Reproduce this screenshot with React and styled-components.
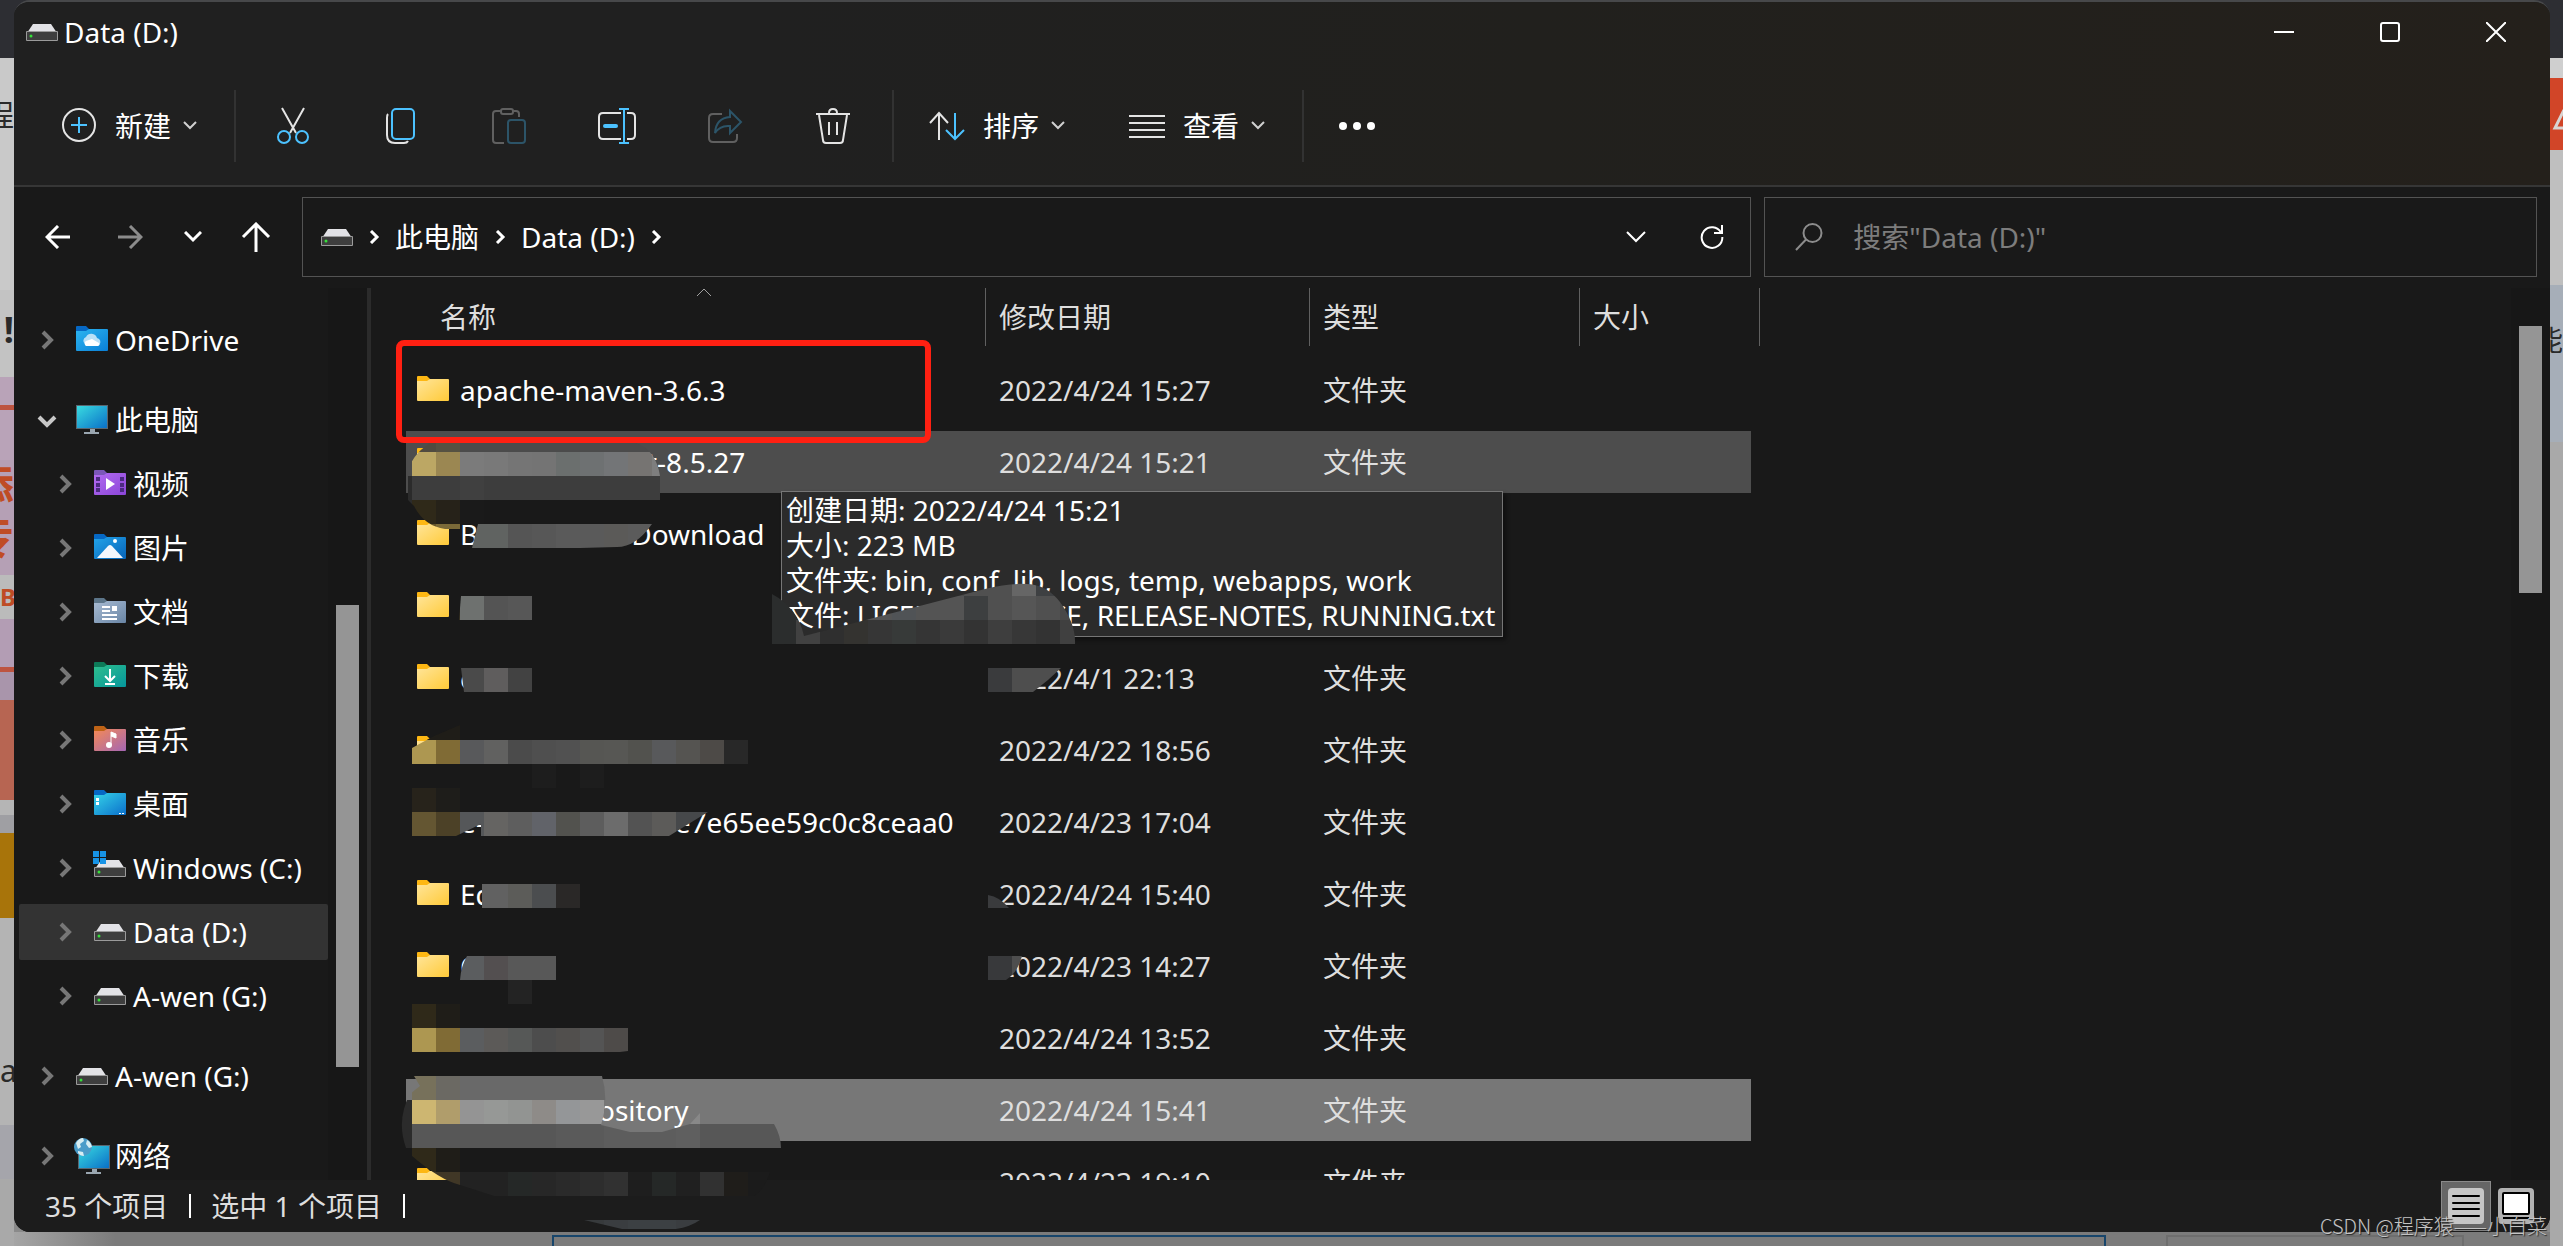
import React, { useState } from "react";
import styled, { createGlobalStyle } from "styled-components";

const treeItems = [
  { id: "onedrive", name: "OneDrive", icon: "onedrive", root: true },
  { id: "pc", name: "此电脑", icon: "pc", root: true, open: true },
  { id: "video", name: "视频", icon: "video" },
  { id: "picture", name: "图片", icon: "picture" },
  { id: "document", name: "文档", icon: "document" },
  { id: "download", name: "下载", icon: "download" },
  { id: "music", name: "音乐", icon: "music" },
  { id: "desktop", name: "桌面", icon: "desktop" },
  { id: "c", name: "Windows (C:)", icon: "system" },
  { id: "d", name: "Data (D:)", icon: "drive" },
  { id: "g", name: "A-wen (G:)", icon: "drive" },
  { id: "g-root", name: "A-wen (G:)", icon: "drive", root: true },
  { id: "network", name: "网络", icon: "network", root: true },
];

// gap is the width of the part of the name that is covered
const files = [
  { head: "apache-maven-3.6.3", date: "2022/4/24 15:27", type: "文件夹" },
  { gap: 187, tail: "t-8.5.27", date: "2022/4/24 15:21", type: "文件夹", state: "hover" },
  { head: "B", gap: 153, tail: "Download" },
  { gap: 72 },
  { head: "c", gap: 60, date: "2022/4/1 22:13", type: "文件夹" },
  { gap: 288, date: "2022/4/22 18:56", type: "文件夹" },
  { head: "e-", gap: 190, tail: "e7e65ee59c0c8ceaa0", date: "2022/4/23 17:04", type: "文件夹" },
  { head: "Ed", gap: 90, date: "2022/4/24 15:40", type: "文件夹" },
  { head: "C", gap: 80, date: "2022/4/23 14:27", type: "文件夹" },
  { gap: 168, date: "2022/4/24 13:52", type: "文件夹" },
  { gap: 138, tail: "ository", date: "2022/4/24 15:41", type: "文件夹", state: "selected" },
  { gap: 288, date: "2022/4/23 19:10", type: "文件夹" },
];

const App = () => {
  const [current, setCurrent] = useState("d");
  const [keyword, setKeyword] = useState("");

  return (
    <Desktop>
      <GlobalStyle />
      <Edge>
        <Strip $h={58} $bg="#2d2e33" />
        <Strip $h={232} $bg="#c9c9c9" $size={30} $pad={42}>程</Strip>
        <Strip $h={87} $bg="#c3c3c3" $size={36} $pad={22} $bold>!</Strip>
        <Strip $h={28} $bg="#b9a3b8" />
        <Strip $h={5} $bg="#bd5440" />
        <Strip $h={50} $bg="#b9a3b8" />
        <Strip $h={55} $bg="#b5a0b5" $color="#bf4c25" $size={44} $pad={4} $bold>添</Strip>
        <Strip $h={60} $bg="#b5a0b5" $color="#bf4c25" $size={44} $bold>专</Strip>
        <Strip $h={44} $bg="#bbbbbb" $color="#bf4c25" $size={24} $pad={10} $bold $start>BA</Strip>
        <Strip $h={48} $bg="#b39db4" />
        <Strip $h={5} $bg="#bd5440" />
        <Strip $h={28} $bg="#a995ab" />
        <Strip $h={100} $bg="#b76552" />
        <Strip $h={15} $bg="#b5b5b5" />
        <Strip $h={18} $bg="#9f9fa3" />
        <Strip $h={85} $bg="#a8740a" />
        <Strip $h={207} $bg="#b4b4b4" $size={30} $pad={138} $start>a</Strip>
        <Strip $h={54} $bg="#a5a5ab" />
        <Strip $h={67} $bg="#a9a9a9" />
      </Edge>

      <Center>
        <Window>
          <Top>
            <TitleBar>
              <FileIcon kind="drive" />
              <Title>Data (D:)</Title>
              <CaptionButton aria-label="最小化">
                <svg width="20" height="20"><path d="M0 10h20" stroke="#fff" strokeWidth="2" /></svg>
              </CaptionButton>
              <CaptionButton aria-label="最大化">
                <svg width="20" height="20" fill="none">
                  <rect x="1" y="1" width="18" height="18" rx="2" stroke="#fff" strokeWidth="2" />
                </svg>
              </CaptionButton>
              <CaptionButton aria-label="关闭">
                <svg width="20" height="20"><path d="M0 0l20 20M20 0L0 20" stroke="#fff" strokeWidth="2" /></svg>
              </CaptionButton>
            </TitleBar>
            <Toolbar>
              <LabelButton>
                <ToolIcon kind="add" />
                新建
                <SmallChevron />
              </LabelButton>
              <Divider />
              <IconButton aria-label="剪切"><ToolIcon kind="cut" /></IconButton>
              <IconButton aria-label="复制"><ToolIcon kind="copy" /></IconButton>
              <IconButton aria-label="粘贴" disabled><ToolIcon kind="paste" /></IconButton>
              <IconButton aria-label="重命名"><ToolIcon kind="rename" /></IconButton>
              <IconButton aria-label="共享" disabled><ToolIcon kind="share" /></IconButton>
              <IconButton aria-label="删除"><ToolIcon kind="trash" /></IconButton>
              <Divider />
              <LabelButton>
                <ToolIcon kind="sort" />
                排序
                <SmallChevron />
              </LabelButton>
              <LabelButton>
                <ToolIcon kind="view" />
                查看
                <SmallChevron />
              </LabelButton>
              <Divider />
              <LabelButton aria-label="更多"><ToolIcon kind="more" /></LabelButton>
            </Toolbar>
          </Top>

          <NavBar>
            <NavButton aria-label="后退">
              <svg width="26" height="24" fill="none" stroke="#fff" strokeWidth="3">
                <path d="M25 12H3M13 1L2 12l11 11" />
              </svg>
            </NavButton>
            <NavButton aria-label="前进">
              <svg width="26" height="24" fill="none" stroke="#8c8c8c" strokeWidth="3">
                <path d="M1 12h22M13 1l11 11-11 11" />
              </svg>
            </NavButton>
            <NavButton aria-label="最近位置" $narrow>
              <svg width="18" height="12" fill="none" stroke="#fff" strokeWidth="3"><path d="M1 1l8 8 8-8" /></svg>
            </NavButton>
            <NavButton aria-label="上移">
              <svg width="30" height="30" fill="none" stroke="#fff" strokeWidth="3">
                <path d="M15 30V3M2 15L15 2l13 13" />
              </svg>
            </NavButton>
            <AddressBar>
              <FileIcon kind="drive" />
              <CrumbChevron />
              <Crumb href="#pc">此电脑</Crumb>
              <CrumbChevron />
              <Crumb href="#d">Data (D:)</Crumb>
              <CrumbChevron />
              <Spacer />
              <AddressButton aria-label="历史记录">
                <svg width="20" height="12" fill="none" stroke="#fff" strokeWidth="2"><path d="M1 1l9 9 9-9" /></svg>
              </AddressButton>
              <AddressButton aria-label="刷新">
                <svg width="26" height="26" fill="none" stroke="#fff" strokeWidth="2">
                  <path d="M22 8.500A10.300 10.300 0 1 0 23.300 13M23 1v8h-8" />
                </svg>
              </AddressButton>
            </AddressBar>
            <SearchBox>
              <svg width="28" height="28" fill="none" stroke="#8c8c8c" strokeWidth="2">
                <circle cx="17.500" cy="10" r="9" />
                <path d="M11 16.500L1 27" />
              </svg>
              <SearchInput
                aria-label="搜索"
                placeholder={'搜索"Data (D:)"'}
                value={keyword}
                onChange={(e) => setKeyword(e.target.value)}
              />
            </SearchBox>
          </NavBar>

          <Main>
            <SideBar>
              <Tree>
                {treeItems.map((item) => (
                  <TreeItem
                    key={item.id}
                    $root={item.root}
                    $active={item.id === current}
                    onClick={() => setCurrent(item.id)}
                  >
                    <TreeChevron open={item.open} />
                    <FileIcon kind={item.icon} />
                    {item.name}
                  </TreeItem>
                ))}
              </Tree>
              <ScrollTrack $top={317}>
                <ScrollThumb $h={462} />
              </ScrollTrack>
            </SideBar>

            <FilePane>
              <FileTable>
                <colgroup>
                  <col width="580" />
                  <col width="324" />
                  <col width="270" />
                  <col width="180" />
                </colgroup>
                <thead>
                  <tr>
                    <Th>
                      <HeadCell $name>
                        名称
                        <SortMark width="16" height="9" fill="none" stroke="#a0a0a0">
                          <path d="M1 8l7-7 7 7" />
                        </SortMark>
                      </HeadCell>
                    </Th>
                    <Th><HeadCell>修改日期</HeadCell></Th>
                    <Th><HeadCell>类型</HeadCell></Th>
                    <Th><HeadCell>大小</HeadCell></Th>
                  </tr>
                </thead>
                <tbody>
                  {files.map((file, i) => (
                    <tr key={i}>
                      <Td>
                        <NameCell $state={file.state}>
                          <FileIcon kind="folder" />
                          <span>
                            {file.head}
                            {file.gap && <Covered $w={file.gap} />}
                            {file.tail}
                          </span>
                        </NameCell>
                      </Td>
                      <Td><Cell $state={file.state}>{file.date}</Cell></Td>
                      <Td><Cell $state={file.state}>{file.type}</Cell></Td>
                      <Td><Cell $state={file.state} $last /></Td>
                    </tr>
                  ))}
                </tbody>
              </FileTable>
              <Tooltip role="tooltip">
                <div>创建日期: 2022/4/24 15:21</div>
                <div>大小: 223 MB</div>
                <div>文件夹: bin, conf, lib, logs, temp, webapps, work</div>
                <div>文件: LICENSE, NOTICE, RELEASE-NOTES, RUNNING.txt</div>
              </Tooltip>
              <RedMark />
            </FilePane>
            <ScrollTrack $top={38}>
              <ScrollThumb $h={267} />
            </ScrollTrack>
          </Main>

          <StatusBar>
            <span>35 个项目</span>
            <StatusLine />
            <span>选中 1 个项目</span>
            <StatusLine />
            <Spacer />
            <ViewButton $active aria-label="详细信息">
              <svg width="36" height="36">
                <rect width="36" height="36" rx="4" fill="#c6c6c6" />
                <path d="M5 8h26M5 15h26M5 21h26M5 28h26" stroke="#000" strokeWidth="2" strokeLinecap="round" />
              </svg>
            </ViewButton>
            <ViewButton aria-label="大缩略图">
              <svg width="36" height="36">
                <rect width="36" height="36" rx="4" fill="#b2b2b2" />
                <rect x="5" y="5" width="26" height="21" rx="1" fill="#fff" stroke="#000" strokeWidth="2" />
                <path d="M5 30h26" stroke="#000" strokeWidth="2" />
              </svg>
            </ViewButton>
          </StatusBar>
        </Window>
        <BelowWindow>
          <BlueFrame />
          <GreyFrame />
        </BelowWindow>
      </Center>

      <Edge>
        <Strip $h={58} $bg="#2d2e33" />
        <Strip $h={20} $bg="#cfcfcf" />
        <Strip $h={72} $bg="#d14528">
          <svg width="13" height="72" fill="none" stroke="#d8d4d2" strokeWidth="3">
            <path d="M14 32L5 50h10" />
          </svg>
        </Strip>
        <Strip $h={135} $bg="#bfbfbf" />
        <Strip $h={157} $bg="#a6aeb8" $size={28} $pad={41}>能</Strip>
        <Strip $h={804} $bg="#a9a9a9" />
      </Edge>

      <Mosaic />
      <Watermark>CSDN @程序猿——小白菜</Watermark>
    </Desktop>
  );
};

export default App;

const folderBody = {
  folder: ["#ffe59a", "#ffca38", "#fdb713"],
  onedrive: ["#2cb5f0", "#0a7fd6", "#0668c4"],
  video: ["#b36cf0", "#8b45d8", "#7b57b8"],
  picture: ["#22a4ea", "#0763b8", "#0668c4"],
  document: ["#a9bcd3", "#6985a5", "#5c7589"],
  download: ["#2fbf8d", "#05969c", "#0d7a58"],
  music: ["#f58a55", "#a466b4", "#bf6316"],
  desktop: ["#35d4e8", "#0b6fcb", "#0668c4"],
};

const Screen = ({ x = 0, y = 0 }) => (
  <g transform={`translate(${x} ${y})`}>
    <rect x="0" y="1" width="32" height="24" fill="#5a6670" />
    <rect x="1" y="2" width="30" height="22" fill="url(#screen)" />
    <path d="M14 25h5v3h4v2H8v-2h6z" fill="#9aa6b0" />
    <defs>
      <linearGradient id="screen" x1="0" y1="0" x2="1" y2="1">
        <stop offset="0" stopColor="#39dbe0" />
        <stop offset="1" stopColor="#0a70c8" />
      </linearGradient>
    </defs>
  </g>
);

const DriveShape = () => (
  <>
    <path d="M1 17L7 8h18l6 9z" fill="#e2e2e6" />
    <rect x="0" y="15" width="32" height="10" rx="1" fill="#9b9b9b" />
    <rect x="1" y="16" width="30" height="8" fill="#3e3e3e" />
    <circle cx="5" cy="20" r="1.500" fill="#35e03a" />
  </>
);

const FileIcon = ({ kind }) => {
  const colors = folderBody[kind];
  return (
    <IconSvg width="32" height="32" viewBox="0 0 32 32" aria-hidden="true">
      {colors && (
        <>
          <defs>
            <linearGradient id={`body-${kind}`} x1="0" y1="0" x2="1" y2="1">
              <stop offset="0" stopColor={colors[0]} />
              <stop offset="1" stopColor={colors[1]} />
            </linearGradient>
          </defs>
          <path d="M0 8V3a1 1 0 0 1 1-1h9l3 3v3z" fill={colors[2]} />
          <path d="M0 7h10l3-2h18a1 1 0 0 1 1 1v20a1 1 0 0 1-1 1H1a1 1 0 0 1-1-1z" fill={`url(#body-${kind})`} />
        </>
      )}
      {kind === "onedrive" && (
        <>
          <path d="M9 20a4 4 0 0 1 1-7 6 6 0 0 1 11 1 4 4 0 0 1 2 7z" fill="#b9e0f7" />
          <path d="M10 22a3 3 0 0 1 0-5l6-2 7 4a2 2 0 0 1-1 3z" fill="#fff" />
        </>
      )}
      {kind === "video" && (
        <>
          <path d="M12 10l9 6-9 6z" fill="#fff" />
          <path d="M2 9h4v4H2zM2 15h4v4H2zM2 20h4v4H2zM26 9h4v4h-4zM26 15h4v4h-4zM26 20h4v4h-4z" fill="#4b2a80" />
        </>
      )}
      {kind === "picture" && (
        <>
          <path d="M3 26l11-12q2-2 4 0l11 12z" fill="#f3f7fd" />
          <circle cx="21" cy="9" r="2" fill="#fff" />
        </>
      )}
      {kind === "document" && (
        <>
          <path d="M8 11h8M8 15h8M8 19h15M8 23h15" stroke="#fff" strokeWidth="2" />
          <rect x="18" y="10" width="5" height="5" fill="#fff" />
        </>
      )}
      {kind === "download" && (
        <path d="M16 9v11M11 16l5 5 5-5M11 24h10" stroke="#fff" strokeWidth="2" fill="none" />
      )}
      {kind === "music" && (
        <>
          <circle cx="15" cy="21" r="3" fill="#fff" />
          <path d="M17 21V8l5 2v4l-5-2" fill="#fff" stroke="#fff" />
        </>
      )}
      {kind === "desktop" && <path d="M2 10h3v3H2zM2 14h3v3H2zM25 25h2v1h-2zM28 25h2v1h-2z" fill="#fff" />}
      {kind === "pc" && <Screen />}
      {kind === "network" && (
        <>
          <Screen x={2} y={4} />
          <circle cx="7" cy="7" r="9" fill="#4a9cc9" />
          <path d="M0 3q3-5 7-5l1 3-4 3 1 3-3 2zM11 0q4 2 5 7l-3 1-3-4zM2 11l5 1 1 4q-4 0-6-3z" fill="#d6edf2" />
        </>
      )}
      {(kind === "drive" || kind === "system") && <DriveShape />}
      {kind === "system" && <path d="M-1-1h6v6h-6zM6-1h6v6H6zM-1 6h6v6h-6zM6 6h6v6H6z" fill="#1793e6" />}
    </IconSvg>
  );
};

const ToolIcon = ({ kind }) => (
  <svg width="36" height="36" viewBox="0 0 36 36" fill="none" stroke="#e4e4e4" strokeWidth="2" aria-hidden="true">
    {kind === "add" && (
      <>
        <circle cx="18" cy="17" r="16" />
        <path d="M18 9v16M10 17h16" stroke="#4cc2ff" />
      </>
    )}
    {kind === "cut" && (
      <>
        <path d="M7 0l14 25M29 0L15 25" />
        <circle cx="9" cy="29" r="6" stroke="#4cc2ff" />
        <circle cx="27" cy="29" r="6" stroke="#4cc2ff" />
      </>
    )}
    {kind === "copy" && (
      <>
        <path d="M5 6Q4 7 4 10v17q0 8 8 8h9q3 0 4-2" />
        <rect x="9" y="1" width="22" height="30" rx="4" stroke="#4cc2ff" />
      </>
    )}
    {kind === "paste" && (
      <g stroke="#606060">
        <path d="M10 3H5q-3 0-3 3v26q0 3 3 3h8M22 3h3q3 0 3 3v3" />
        <rect x="10" y="1" width="12" height="5" rx="2" />
        <rect x="17" y="12" width="17" height="23" rx="3" stroke="#2c5468" />
      </g>
    )}
    {kind === "rename" && (
      <>
        <path d="M22 5H4q-4 0-4 4v18q0 4 4 4h18M28 5h4q4 0 4 4v18q0 4-4 4h-4" />
        <path d="M25 0v36M20 1h10M20 35h10" stroke="#4cc2ff" />
        <path d="M6 18h11" stroke="#4cc2ff" strokeWidth="4" strokeLinecap="round" />
      </>
    )}
    {kind === "share" && (
      <>
        <path d="M15 6H6q-4 0-4 4v20q0 4 4 4h20q4 0 4-4v-4" stroke="#606060" />
        <path d="M23 3l11 11-11 11v-7q-10-1-15 7 1-15 15-16z" stroke="#2c5468" />
      </>
    )}
    {kind === "trash" && (
      <>
        <path d="M1 6h34M14 5q0-4 4-4t4 4M4 7l4 25q0 3 3 3h14q3 0 3-3l4-25M14 14v13M22 14v13" />
      </>
    )}
    {kind === "sort" && (
      <>
        <path d="M10 32V6M1 15l9-10 9 10" />
        <path d="M26 5v26M17 22l9 9 9-9" stroke="#4cc2ff" />
      </>
    )}
    {kind === "view" && <path d="M0 8h36M0 15h36M0 22h36M0 29h36" />}
    {kind === "more" && (
      <g fill="#fff" stroke="none">
        <circle cx="4" cy="18" r="4" />
        <circle cx="18" cy="18" r="4" />
        <circle cx="32" cy="18" r="4" />
      </g>
    )}
  </svg>
);

const SmallChevron = () => (
  <Chevron width="14" height="9" fill="none" stroke="#d0d0d0" strokeWidth="2">
    <path d="M1 1l6 6 6-6" />
  </Chevron>
);

const CrumbChevron = () => (
  <CrumbSvg width="42" height="14" fill="none" stroke="#fff" strokeWidth="3">
    <path d="M18 1l6 6-6 6" />
  </CrumbSvg>
);

const TreeChevron = ({ open }) => (
  <IconSvg width="12" height="18" fill="none" stroke={open ? "#c8c8c8" : "#777"} strokeWidth="4">
    <path d={open ? "M-2 6l8 8 8-8" : "M2 1l8 8-8 8"} />
  </IconSvg>
);

// Every cover is a brush stroke (clip) over bands of 24px blocks: [x, y, colours]
const covers = [
  {
    clip: "M430 443H636Q656 450 660 476V500H652V524Q636 547 617 547L580 548H472L478 524H460V529H445Q424 526 414 506L408 500V474Q410 456 430 443Z",
    bands: [
      [412, 428, "#504b40 #565142 #4b4b4b #4b4b4b #4b4b4b #4b4b4b #4b4b4b #4b4b4b #4b4b4b #4b4b4b #4b4b4b"],
      [412, 452, "#bca764 #9b8752 #7b7b7b #797979 #757575 #747474 #6b6f6e #6e7172 #737577 #767472 #7e7e7e"],
      [388, 476, "#2b2b2b #3d3d3d #3d3d3d #404040 #3d3d3d #3d3d3d #3d3d3d #3d3d3d #3d3d3d #3d3d3d #3d3d3d #3d3d3d"],
      [388, 500, "#2b2b2b #2f2919 #262219 #1a1a1a #191919 #191919 #191919 #191919 #191919 #191919 #191919 #191919"],
      [412, 524, "#65552a #7b6a38 #606361 #606361 #555555 #575757 #5a5a5a #5a5a5a #5b5a58 #5b5b5b #484848"],
    ],
  },
  { clip: "M461 596H532V620H459Z", bands: [[436, 596, "#3a3422 #6e716f #545454 #575757"]] },
  { clip: "M461 668H532V692H464Z", bands: [[460, 668, "#4a4a4a #5f5d5d #424242"]] },
  {
    clip: "M412 748L434 736L460 725V740H748V764H604V788H532V764H412Z",
    bands: [
      [412, 716, "#1f1d18 #1f1d18"],
      [412, 740, "#ad9751 #806b35 #58595b #616160 #4b4b4b #4f4f4f #515151 #565653 #575754 #52524e #58595b #555451 #4d4a47 #282828"],
      [532, 764, "#1d1d1d #191919 #1d1d1d"],
    ],
  },
  {
    clip: "M412 788H708V812L669 836H481V824L456 836H412Z",
    bands: [
      [412, 788, "#27231b #1e1d1a"],
      [412, 812, "#645632 #4c4127 #555759 #656462 #5e5e5e #616369 #52524e #5d5d5d #6c6c6c #535353 #5c5b59 #46484a #46484a"],
    ],
  },
  { clip: "M482 884H580V908H482Z", bands: [[484, 884, "#5c5c59 #5c5c59 #4b4d4f #2a2827"], [460, 884, "#616161 #616161"]] },
  {
    clip: "M467 956H556V980H532V1004H508V980H460Q461 966 467 956Z",
    bands: [[460, 956, "#5b5d5f #534f50 #585858 #585858"], [508, 980, "#232323"]],
  },
  {
    clip: "M412 1004H460V1028H628V1051L620 1052H412Z",
    bands: [
      [412, 1004, "#2f2919 #1f1d18"],
      [412, 1028, "#ad9751 #806b35 #5b5d5f #5c5a58 #565857 #4d4d4d #514f4d #545454 #4e4b49"],
    ],
  },
  {
    clip: "M414 1076H602Q609 1100 601 1125L630 1132H662L690 1124L700 1113V1124H774Q781 1136 781 1148H770V1172Q764 1190 754 1196H494L460 1185Q440 1180 412 1156V1148H406Q396 1120 410 1094L420 1086Z",
    bands: [
      [412, 1076, "#77715b #6b6963 #696969 #696969 #696969 #696969 #696969 #696969 #696969"],
      [388, 1100, "#2b2b2b #cdb671 #b09d6b #949494 #969896 #929492 #8e8b88 #949698 #989898 #777777 #777777 #777777 #888888"],
      [388, 1124, "#2b2b2b #575757 #575757 #575757 #575757 #575757 #575757 #5a5a5a #5a5a5a #5d5d5d #5d5d5d #5d5d5d #5f5f5f #575757 #575757 #575757 #575757"],
      [412, 1148, "#2f2919 #1f1d18 #191919 #191919 #191919 #191919 #191919 #191919 #191919 #191919 #191919 #191919 #191919 #191919 #191919"],
      [412, 1172, "#403726 #403726 #222222 #222222 #252827 #272727 #2a2a2a #2d2d2d #313131 #1e1e1e #252827 #202020 #313131 #1f1d1a #1b1b1b"],
    ],
  },
  { clip: "M584 1220H700Q690 1227 676 1229H622Z", bands: [[580, 1220, "#373a3c #3a3d40 #3c4043 #3c4043 #3a3d40"]] },
  {
    clip: "M772 594Q798 608 804 636L985 589Q1008 583 1026 584Q1046 584 1060 602Q1076 624 1075 644H772Z",
    bands: [
      [772, 572, "#2b2d2d #2b2d2d #2f2f2f #2f2f2f #494949 #494949 #4c4c4c #4c4c4c #505050 #505050 #666666 #3e4042 #3e4042"],
      [772, 596, "#2b2d2d #2b2d2d #373737 #494949 #545454 #505356 #545454 #545454 #3d3f40 #505050 #565656 #505050 #484848"],
      [772, 620, "#2b2d2d #414141 #2f2f2f #343330 #363636 #373a39 #353535 #3a3a3a #333333 #3e3e3e #373737 #333333 #404040"],
    ],
  },
  { clip: "M988 668H1061L1048 680L1033 692H988Z", bands: [[988, 668, "#3a3b3d #4e4e4e #4e4e4e #555555"]] },
  { clip: "M988 895Q1000 897 1009 908H988Z", bands: [[988, 884, "#3a3b3d"]] },
  { clip: "M988 956H1022Q1018 972 1006 980H988Z", bands: [[988, 956, "#38393b #4e4e4e"]] },
];

const Mosaic = () => (
  <MosaicSvg aria-hidden="true">
    {covers.map((cover, i) => (
      <g key={i} clipPath={`url(#stroke-${i})`} shapeRendering="crispEdges">
        <clipPath id={`stroke-${i}`}>
          <path d={cover.clip} />
        </clipPath>
        {cover.bands.map(([x, y, colors]) =>
          colors.split(" ").map((color, n) => (
            <rect key={`${y}-${n}`} x={x + n * 24} y={y} width="24" height="24" fill={color} />
          ))
        )}
      </g>
    ))}
  </MosaicSvg>
);

const GlobalStyle = createGlobalStyle`
  * {
    box-sizing: border-box;
  }
  body {
    margin: 0;
    font-family: "Noto Sans", "Noto Sans CJK SC", sans-serif;
    font-size: 28px;
    line-height: 36px;
    color: #fff;
  }
  button, input {
    font: inherit;
    color: inherit;
    background: none;
    border: 0;
    padding: 0;
    margin: 0;
    outline: 0;
  }
`;

const Desktop = styled.div`
  position: relative;
  height: 100vh;
  display: grid;
  grid-template-columns: 14px minmax(0, 1fr) 13px;
  grid-template-rows: 100%;
  overflow: hidden;
  background: linear-gradient(#2d2e33 0 58px, #8a8a8a 58px);
`;

const Edge = styled.div`
  overflow: hidden;
`;

const Strip = styled.div`
  display: flex;
  justify-content: ${({ $start }) => ($start ? "flex-start" : "flex-end")};
  height: ${({ $h }) => $h}px;
  padding-top: ${({ $pad = 0 }) => $pad}px;
  overflow: hidden;
  background: ${({ $bg }) => $bg};
  color: ${({ $color = "#2a2a2a" }) => $color};
  font-size: ${({ $size = 28 }) => $size}px;
  font-weight: ${({ $bold }) => ($bold ? 700 : 400)};
  line-height: 1;
`;

const Center = styled.div`
  display: flex;
  flex-direction: column;
  min-height: 0;
`;

const Window = styled.div`
  flex: 1;
  min-height: 0;
  display: flex;
  flex-direction: column;
  overflow: hidden;
  border-top: 2px solid #47484a;
  border-radius: 16px;
  background: #191919;
`;

const BelowWindow = styled.div`
  height: 14px;
  display: flex;
  padding: 3px 86px 0 538px;
  gap: 60px;
  background: linear-gradient(90deg, #a5a5a5, #7b7b7b 4%);
`;

const BlueFrame = styled.div`
  flex: 1;
  border: 2px solid #17456b;
  border-bottom: 0;
`;

const GreyFrame = styled.div`
  width: 298px;
  border: 2px solid #6e6e6e;
  border-bottom: 0;
`;

const Top = styled.header`
  background: linear-gradient(90deg, #202020 30%, #21201d 60%, #24201b 100%);
  border-bottom: 2px solid #363636;
`;

const TitleBar = styled.div`
  height: 60px;
  display: flex;
  align-items: center;
  gap: 6px;
  padding: 0 4px 0 12px;
`;

const Title = styled.span`
  flex: 1;
`;

const CaptionButton = styled.button`
  width: 100px;
  height: 60px;
  display: flex;
  align-items: center;
  justify-content: center;
`;

const Toolbar = styled.div`
  height: 123px;
  display: flex;
  align-items: center;
  padding: 4px 0 0 15px;
`;

const LabelButton = styled.button`
  height: 72px;
  display: flex;
  align-items: center;
  gap: 18px;
  padding: 0 32px;
`;

const IconButton = styled.button`
  width: 108px;
  height: 72px;
  display: flex;
  align-items: center;
  justify-content: center;

  svg {
    overflow: visible;
  }
`;

const Chevron = styled.svg`
  margin-left: -6px;
`;

const Divider = styled.div`
  width: 2px;
  height: 72px;
  margin: 0 3px 0 5px;
  background: #323232;
`;

const NavBar = styled.div`
  height: 101px;
  display: flex;
  padding: 10px 13px 11px 8px;
`;

const NavButton = styled.button`
  width: ${({ $narrow }) => ($narrow ? 54 : 72)}px;
  display: flex;
  align-items: center;
  justify-content: center;
`;

const AddressBar = styled.div`
  flex: 2 1 0;
  display: flex;
  align-items: center;
  margin: 0 13px 0 10px;
  padding-left: 18px;
  border: 1px solid #535353;
`;

const CrumbSvg = styled.svg`
  flex: none;
`;

const Crumb = styled.a`
  color: #fff;
  text-decoration: none;
`;

const Spacer = styled.div`
  flex: 1;
`;

const AddressButton = styled.button`
  width: 76px;
  height: 78px;
  display: flex;
  align-items: center;
  justify-content: center;
`;

const SearchBox = styled.label`
  flex: 1 1 0;
  display: flex;
  align-items: center;
  gap: 30px;
  padding: 0 26px 0 30px;
  border: 1px solid #535353;
`;

const SearchInput = styled.input`
  flex: 1;
  min-width: 0;

  &::placeholder {
    color: #7d7d7d;
    opacity: 1;
  }
`;

const Main = styled.main`
  flex: 1;
  min-height: 0;
  display: flex;
`;

const SideBar = styled.nav`
  width: 357px;
  display: flex;
  border-right: 4px solid #2b2b2b;
`;

const Tree = styled.div`
  flex: 1;
  display: flex;
  flex-direction: column;
  gap: 8px;
  overflow: hidden;
  padding: 8px 0 0 5px;
`;

const TreeItem = styled.button`
  flex: none;
  height: 56px;
  display: flex;
  align-items: center;
  gap: 7px;
  margin-top: ${({ $root }) => ($root ? 16 : 0)}px;
  padding-left: ${({ $root }) => ($root ? 22 : 40)}px;
  border-radius: 2px;
  background: ${({ $active }) => ($active ? "#333" : "transparent")};
  white-space: nowrap;

  svg:first-child {
    margin-right: 16px;
  }
`;

const IconSvg = styled.svg`
  flex: none;
  overflow: visible;
`;

const ScrollTrack = styled.div`
  width: 39px;
  padding: ${({ $top }) => $top}px 8px 0;
  background: #171717;
`;

const ScrollThumb = styled.div`
  height: ${({ $h }) => $h}px;
  background: #959595;
`;

const FilePane = styled.section`
  position: relative;
  flex: 1;
  overflow: hidden;
  padding-left: 35px;
`;

const FileTable = styled.table`
  width: 1354px;
  table-layout: fixed;
  border-collapse: collapse;
`;

const Th = styled.th`
  height: 66px;
  padding: 0;
  vertical-align: top;
  font-weight: 400;
`;

const HeadCell = styled.div`
  position: relative;
  height: 58px;
  display: flex;
  align-items: center;
  padding-left: ${({ $name }) => ($name ? 34 : 13)}px;
  border-right: 1px solid #606060;
  color: #dedede;
`;

const SortMark = styled.svg`
  position: absolute;
  top: 0;
  left: 50%;
`;

const Td = styled.td`
  height: 72px;
  padding: 0;
`;

const rowColors = { hover: "#4d4d4d", selected: "#777" };

const Cell = styled.div`
  height: 62px;
  display: flex;
  align-items: center;
  margin-right: ${({ $last }) => ($last ? 9 : 0)}px;
  padding-left: 13px;
  background: ${({ $state }) => rowColors[$state] || "transparent"};
  color: #dedede;
  white-space: nowrap;
`;

const NameCell = styled(Cell)`
  gap: 11px;
  padding-left: 11px;
  color: #fff;
`;

const Covered = styled.span`
  display: inline-block;
  width: ${({ $w }) => $w}px;
`;

const Tooltip = styled.div`
  position: absolute;
  top: 203px;
  left: 410px;
  padding: 1px 7px 3px 4px;
  border: 1px solid #767676;
  background: #2b2b2b;
  box-shadow: 3px 3px 4px rgba(0, 0, 0, 0.4);
  line-height: 35px;
  white-space: nowrap;
`;

const RedMark = styled.div`
  position: absolute;
  top: 52px;
  left: 25px;
  width: 535px;
  height: 103px;
  border: 6px solid #ff2012;
  border-radius: 8px;
`;

const StatusBar = styled.footer`
  height: 52px;
  display: flex;
  align-items: center;
  padding: 0 9px 0 31px;
  background: #1c1c1c;
  color: #dedede;
`;

const StatusLine = styled.div`
  width: 2px;
  height: 24px;
  margin: 0 20px 0 21px;
  background: #fff;
`;

const ViewButton = styled.button`
  width: 50px;
  height: 50px;
  display: flex;
  align-items: center;
  justify-content: center;
  background: ${({ $active }) => ($active ? "#666" : "transparent")};
  border: 1px solid ${({ $active }) => ($active ? "#8a8a8a" : "transparent")};
`;

const MosaicSvg = styled.svg`
  position: absolute;
  top: 0;
  left: 0;
  width: 100%;
  height: 100%;
  pointer-events: none;
`;

const Watermark = styled.div`
  position: absolute;
  right: 16px;
  bottom: 4px;
  font-family: "Noto Sans CJK SC", sans-serif;
  font-size: 20px;
  font-weight: 300;
  line-height: 32px;
  color: #c4c4c4;
  text-shadow: 1px 1px 1px #222;
`;
